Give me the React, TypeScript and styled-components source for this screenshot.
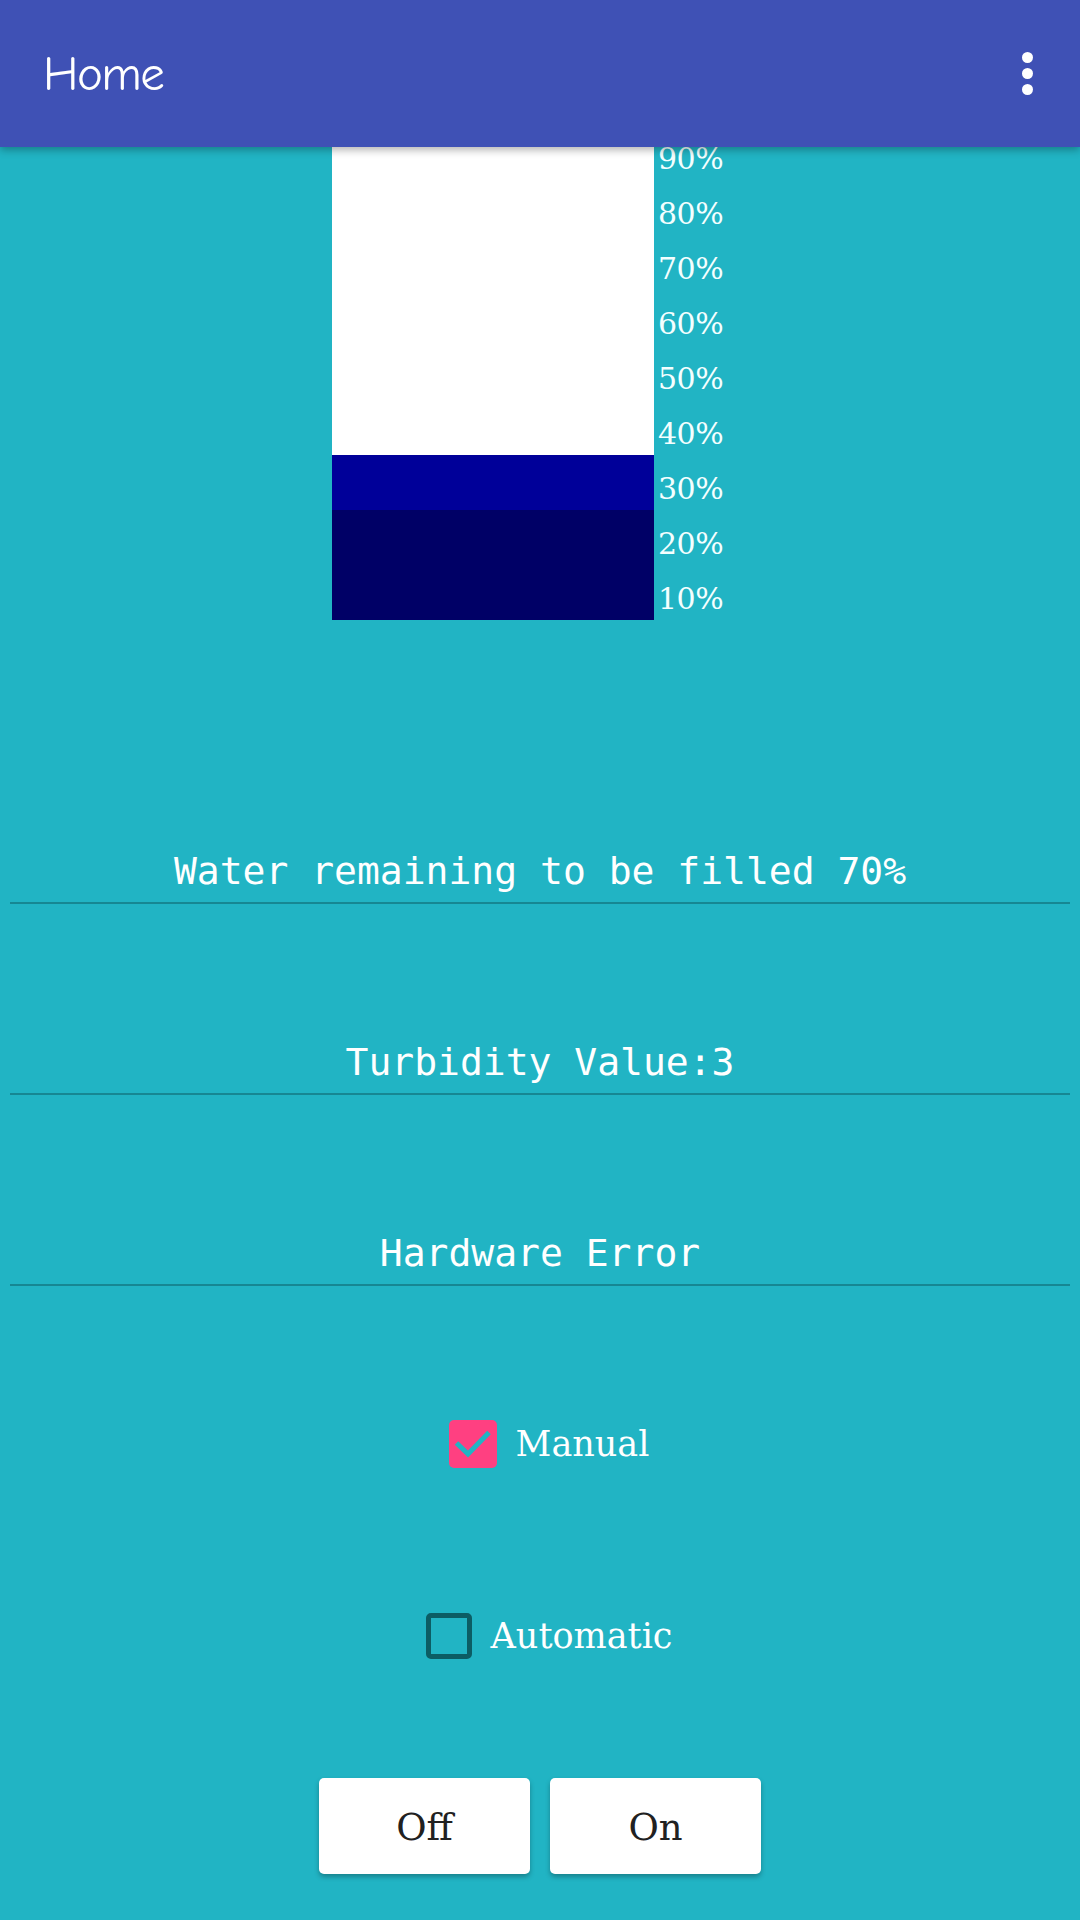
import React from "react";
import styled, { createGlobalStyle } from "styled-components";

const Global = createGlobalStyle`
  html, body { margin: 0; padding: 0; background: #21b4c4; }
  body { width: 1080px; min-height: 1920px; overflow: hidden; }
  * { box-sizing: border-box; }
`;

const AppBar = styled.header`
  position: fixed;
  top: 0;
  left: 0;
  right: 0;
  height: 147px;
  background: #3f51b5;
  display: flex;
  align-items: center;
  justify-content: space-between;
  padding: 0 45px 0 43px;
  box-shadow: 0 3px 8px rgba(0, 0, 0, 0.3);
  z-index: 10;
`;

const Title = styled.h1`
  margin: 0;
  color: #fff;
  font-family: "Comic Sans MS", "Comic Neue", Roboto, sans-serif;
  font-weight: 400;
  font-size: 49px;
  letter-spacing: -1.5px;
`;

const Overflow = styled.div`
  display: flex;
  flex-direction: column;
  gap: 5px;
  padding-right: 2px;
`;

const Dot = styled.span`
  width: 11px;
  height: 11px;
  border-radius: 50%;
  background: #fff;
`;

const Page = styled.main`
  display: flex;
  flex-direction: column;
  padding-top: 70px;
`;

const TankRow = styled.div`
  display: flex;
  align-items: flex-start;
  padding-left: 332px;
  gap: 4px;
`;

const Tank = styled.div`
  width: 322px;
  display: flex;
  flex-direction: column;
`;

const Segment = styled.div<{ $fill: string }>`
  height: 55px;
  background: ${(p) => p.$fill};
`;

const Scale = styled.div`
  display: flex;
  flex-direction: column;
  padding-top: 6px;
`;

const ScaleLabel = styled.div`
  height: 55px;
  line-height: 55px;
  font-family: "DejaVu Serif", serif;
  font-size: 30px;
  color: #f4ffff;
  letter-spacing: -0.5px;
`;

const Field = styled.div<{ $gap: number }>`
  margin: ${(p) => p.$gap}px 10px 0;
  padding-bottom: 9px;
  border-bottom: 2px solid #168793;
  text-align: center;
  font-family: "DejaVu Sans Mono", monospace;
  font-size: 38px;
  line-height: 44px;
  color: #fff;
`;

const CheckRow = styled.label<{ $gap: number }>`
  margin-top: ${(p) => p.$gap}px;
  display: flex;
  justify-content: center;
  align-items: center;
  gap: 19px;
`;

const BoxArea = styled.span`
  padding-left: 18px;
  display: flex;
`;

const Box = styled.span<{ $checked: boolean }>`
  width: ${(p) => (p.$checked ? 48 : 46)}px;
  height: ${(p) => (p.$checked ? 48 : 46)}px;
  border-radius: 5px;
  background: ${(p) => (p.$checked ? "#ff4081" : "transparent")};
  border: ${(p) => (p.$checked ? "none" : "5px solid #0c5d64")};
  display: flex;
  align-items: center;
  justify-content: center;
`;

const CheckText = styled.span`
  font-family: "DejaVu Serif", serif;
  font-size: 35px;
  color: #fff;
  line-height: 48px;
`;

const Buttons = styled.div`
  margin-top: 118px;
  display: flex;
  justify-content: center;
  gap: 20px;
`;

const Button = styled.button`
  width: 211px;
  height: 96px;
  border: none;
  border-radius: 5px;
  background: #fff;
  box-shadow: 0 3px 5px rgba(0, 0, 0, 0.28);
  font-family: "DejaVu Serif", serif;
  font-size: 37px;
  color: #212121;
  padding: 0;
  padding-top: 2px;
`;

const levels = ["100%", "90%", "80%", "70%", "60%", "50%", "40%", "30%", "20%", "10%"];

const segColor = (i: number) => (i < 7 ? "#ffffff" : i === 7 ? "#000099" : "#000066");

function CheckBox({ checked, label, gap }: { checked: boolean; label: string; gap: number }) {
  return (
    <CheckRow $gap={gap}>
      <BoxArea>
        <Box $checked={checked}>
          {checked && (
            <svg width="48" height="48" viewBox="0 0 48 48">
              <path d="M7.5 23 L19 34 L40 12.5" fill="none" stroke="#21b4c4" strokeWidth="5" />
            </svg>
          )}
        </Box>
      </BoxArea>
      <CheckText>{label}</CheckText>
    </CheckRow>
  );
}

export default function App() {
  return (
    <>
      <Global />
      <AppBar>
        <Title>Home</Title>
        <Overflow>
          <Dot />
          <Dot />
          <Dot />
        </Overflow>
      </AppBar>
      <Page>
        <TankRow>
          <Tank>
            {levels.map((l, i) => (
              <Segment key={l} $fill={segColor(i)} />
            ))}
          </Tank>
          <Scale>
            {levels.map((l) => (
              <ScaleLabel key={l}>{l}</ScaleLabel>
            ))}
          </Scale>
        </TankRow>
        <Field $gap={223}>Water remaining to be filled 70%</Field>
        <Field $gap={136}>Turbidity Value:3</Field>
        <Field $gap={136}>Hardware Error</Field>
        <CheckBox checked label="Manual" gap={134} />
        <CheckBox checked={false} label="Automatic" gap={144} />
        <Buttons>
          <Button>Off</Button>
          <Button>On</Button>
        </Buttons>
      </Page>
    </>
  );
}
